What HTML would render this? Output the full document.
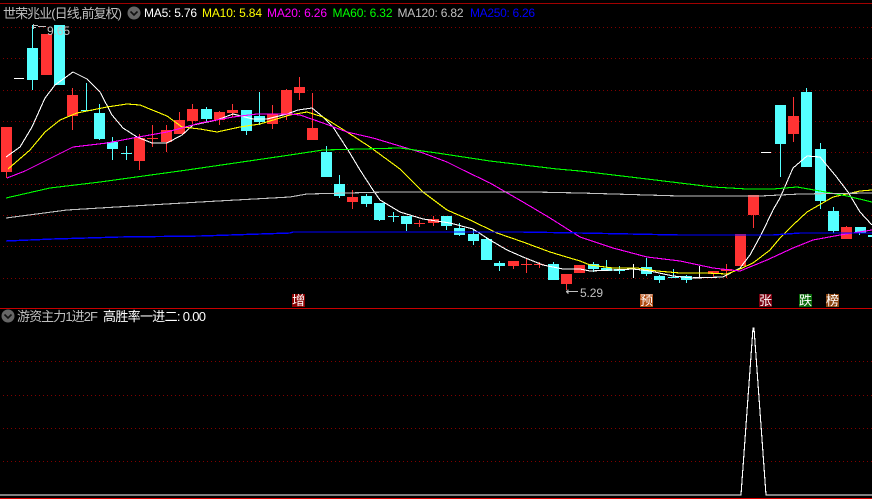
<!DOCTYPE html>
<html><head><meta charset="utf-8"><style>
html,body{margin:0;padding:0;background:#000;width:872px;height:499px;overflow:hidden}
svg{display:block}
text{font-family:"Liberation Sans","WenQuanYi Zen Hei","Noto Sans CJK SC",sans-serif;font-size:12px}
.c{shape-rendering:crispEdges;fill:none;stroke-width:1}
.m{shape-rendering:crispEdges;fill:none;stroke-width:1.1}
.l{font-size:13px;fill:#fff;text-anchor:middle}
</style></head><body>
<svg width="872" height="499" viewBox="0 0 872 499" xmlns="http://www.w3.org/2000/svg">
<rect width="872" height="499" fill="#000"/>
<g class="c" stroke="#800000" stroke-dasharray="1 3">
<path d="M3 27.5H872M3 58.5H872M3 90.5H872M3 121.5H872M3 152.5H872M3 184.5H872M3 215.5H872M3 246.5H872M3 278.5H872M3 361.5H872M3 395.5H872M3 428.5H872M3 461.5H872"/>
</g>
<path class="c" stroke="#a00000" d="M0 3.5H872"/>
<path class="c" stroke="#c80000" d="M0 308.5H872"/>
<rect x="0" y="498" width="872" height="1" fill="#e00000"/>

<!-- candles -->
<path class="c" stroke="#ff3333" d="M6.5 170V178M72.5 88V130M139.5 134V170M152.5 125V147M166.5 125V152M179.5 112V134M192.5 104V124M219.5 111V125M232.5 104V117M272.5 105V129M286.5 89V120M299.5 77V100M312.5 93V128M352.5 190V209M419.5 220V227M433.5 216V226M513.5 261V269M526.5 259V273M539.5 262V268M566.5 284V290M713.5 271V278M726.5 264V278M753.5 215V228M793.5 97V142M846.5 226V239M147 138.5H158M414 223.5H425M521 264.5H532M534 264.5H544"/>
<path shape-rendering="crispEdges" fill="#ff3333" d="M1 127h11V172H1zM41 34h11V75H41zM67 95h11V116H67zM134 138h11V161H134zM161 130h11V142H161zM174 120h11V134H174zM187 109h11V121H187zM214 112h11V120H214zM227 110h11V113H227zM267 114h11V124H267zM281 90h11V115H281zM294 87h11V93H294zM307 128h11V140H307zM347 197h11V202H347zM428 219h11V223H428zM508 261h11V266H508zM561 274h11V284H561zM574 265h11V273H574zM708 271h11V274H708zM721 269h11V271H721zM735 234h11V266H735zM748 195h11V215H748zM788 116h11V134H788zM841 227h11V239H841z"/>
<path class="c" stroke="#55ffff" d="M32.5 25V90M86.5 83V111M99.5 104V140M112.5 137V160M126.5 146V160M206.5 107V122M246.5 110V135M259.5 92V125M326.5 146V177M339.5 175V198M366.5 194V207M379.5 203V221M393.5 212V222M406.5 216V231M446.5 216V230M459.5 223V236M473.5 230V245M486.5 238V260M499.5 261V271M553.5 262V280M593.5 262V272M606.5 260V270M619.5 266V274M646.5 258V276M659.5 275V283M673.5 269V278M686.5 275V283M780.5 144V177M806.5 88V92M820.5 143V209M833.5 207V233M859.5 227V235M81 110.5H92M121 153.5H132M388 216.5H399M668 277.5H679"/>
<path shape-rendering="crispEdges" fill="#55ffff" d="M27 48h11V80H27zM54 25h11V85H54zM94 113h11V139H94zM107 142h11V149H107zM241 110h11V131H241zM254 116h11V122H254zM201 109h11V119H201zM321 152h11V177H321zM334 184h11V196H334zM361 196h11V204H361zM374 203h11V220H374zM401 216h11V224H401zM441 216h11V226H441zM454 228h11V235H454zM468 234h11V241H468zM481 239h11V260H481zM494 263h11V266H494zM548 264h11V280H548zM588 264h11V269H588zM601 268h11V271H601zM614 269h11V271H614zM641 267h11V274H641zM654 276h11V280H654zM681 276h11V280H681zM775 105h11V144H775zM801 92h11V167H801zM815 149h11V201H815zM828 211h11V231H828zM855 227h11V233H855zM868 235h4V237H868z"/>
<path class="c" stroke="#fff" d="M14 78.5H24M761 152.5H771M633.5 264V278M699.5 266V278M693 277.5H705"/>

<!-- MAs -->
<polyline class="m" stroke="#fff" points="6,157 20,147 32,127 45,98 55,85 73,72 87,79 100,92 112,115 123,128 137,137 152,143 167,143 182,135 193,125 217,120 233,114 253,119 267,119 287,114 298,110 312,108 323,117 333,127 348,150 360,170 373,190 380,200 400,212 423,219 450,223 473,229 490,240 507,250 523,257 543,265 563,269 580,269 590,271 613,270 633,269 650,271 673,276 693,278 723,277 740,268 750,255 762,233 773,210 780,198 793,168 807,156 820,157 835,175 848,192 860,212 872,225"/>
<polyline class="m" stroke="#ffff00" points="8,169 30,150 45,132 60,120 77,113 107,107 127,104 140,105 167,116 182,127 200,129 217,132 240,127 260,124 290,115 307,112 323,117 347,132 370,147 400,169 423,192 447,210 470,220 497,233 523,242 550,252 580,261 590,265 613,268 637,268 657,271 680,273 707,273 727,274 740,269 753,263 770,250 780,238 793,225 807,212 833,197 860,191 872,190"/>
<polyline class="m" stroke="#ff00ff" points="7,178 25,171 43,162 73,147 107,143 133,138 167,132 200,123 233,117 257,114 290,114 300,115 323,123 347,132 373,138 403,147 423,153 447,162 463,170 490,183 523,202 550,218 580,237 613,248 647,257 680,261 713,268 740,271 767,260 793,248 813,240 840,235 872,230"/>
<polyline class="m" stroke="#00ff00" points="6,198 50,188 100,182 187,170 290,155 323,150 400,148 437,153 490,161 557,169 580,171 647,179 713,187 747,189 773,189 797,187 820,191 847,196 872,202"/>
<polyline class="m" stroke="#c0c0c0" points="6,218 67,210 133,206 200,202 290,197 307,194 387,192 533,192 580,193 680,196 760,196 800,194 872,193"/>
<polyline class="m" stroke="#0000ff" style="stroke-width:1.4" points="6,241 53,239 120,237 200,236 290,233 293,232 520,232 580,233 680,235 773,235 800,233 872,233"/>

<!-- lower chart -->
<polyline class="m" stroke="#fff" points="0,495 740,495 741,495 753,328 754,328 766,495 767,495 872,495"/>

<!-- header -->
<text x="3" y="18" fill="#c0c0c0" textLength="119" style="font-size:13px">世荣兆业(日线,前复权)</text>
<circle cx="134" cy="13" r="6.5" fill="#666"/>
<path d="M130.5 11.5l3.5 3.5 3.5-3.5" fill="none" stroke="#111" stroke-width="1.6"/>
<text x="144" y="17" fill="#fff" textLength="53">MA5: 5.76</text>
<text x="202" y="17" fill="#ffff00" textLength="60">MA10: 5.84</text>
<text x="267" y="17" fill="#ff00ff" textLength="60">MA20: 6.26</text>
<text x="332.5" y="17" fill="#00ff00" textLength="60">MA60: 6.32</text>
<text x="397.5" y="17" fill="#c0c0c0" textLength="66">MA120: 6.82</text>
<text x="470" y="17" fill="#0000ff" textLength="65">MA250: 6.26</text>

<circle cx="8" cy="316" r="6.5" fill="#666"/>
<path d="M4.5 314.5l3.5 3.5 3.5-3.5" fill="none" stroke="#111" stroke-width="1.6"/>
<text x="17" y="321" fill="#c0c0c0" textLength="81" style="font-size:13px">游资主力1进2F</text>
<text x="103" y="321" fill="#fff" textLength="103" style="font-size:13px">高胜率一进二: 0.00</text>

<!-- price notes -->
<path class="c" stroke="#c0c0c0" d="M33.5 24V29M34 25.5H38M34 27.5H36M38 26.5H46"/>
<text x="47" y="35" fill="#c0c0c0" textLength="23">9.65</text>
<path class="c" stroke="#c0c0c0" d="M566 291.5H578M567 290.5V293M568 289.5V294"/>
<text x="580" y="297" fill="#c0c0c0" textLength="23">5.29</text>

<!-- badges -->
<rect x="292" y="294" width="13" height="13" fill="#8a0000"/><text class="l" x="298.5" y="305">增</text>
<rect x="640" y="294" width="13" height="13" fill="#b04a10"/><text class="l" x="646.5" y="305">预</text>
<rect x="759" y="294" width="13" height="13" fill="#7a0010"/><text class="l" x="765.5" y="305">张</text>
<rect x="799" y="294" width="13" height="13" fill="#0a6a0a"/><text class="l" x="805.5" y="305">跌</text>
<rect x="826" y="294" width="13" height="13" fill="#8a4410"/><text class="l" x="832.5" y="305">榜</text>
</svg>
</body></html>
